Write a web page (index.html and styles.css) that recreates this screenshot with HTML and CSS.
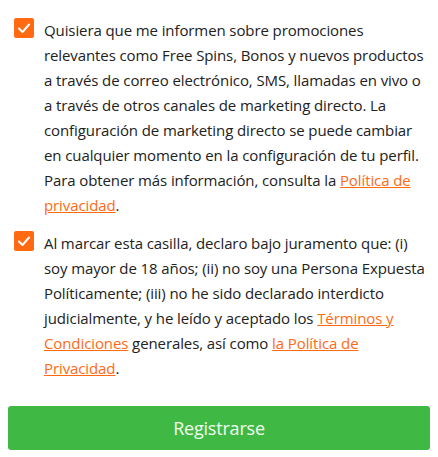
FILE: index.html
```html
<!DOCTYPE html>
<html lang="es">
<head>
<meta charset="utf-8">
<link rel="stylesheet" href="styles.css">
</head>
<body>
<div class="form">
  <label class="consent consent-marketing">
    <span class="box"><svg viewBox="0 0 20 20" width="20" height="20"><path d="M5 10.5 L8.5 14 L15 6.5" fill="none" stroke="#fff" stroke-width="2" stroke-linecap="round" stroke-linejoin="round"/></svg></span>
    <span class="text">Quisiera que me informen sobre promociones relevantes como Free Spins, Bonos y nuevos productos a través de correo electrónico, SMS, llamadas en vivo o a través de otros canales de marketing directo. La configuración de marketing directo se puede cambiar en cualquier momento en la configuración de tu perfil. Para obtener más información, consulta la <a href="#">Política de privacidad</a>.</span>
  </label>
  <label class="consent consent-legal">
    <span class="box"><svg viewBox="0 0 20 20" width="20" height="20"><path d="M5 10.5 L8.5 14 L15 6.5" fill="none" stroke="#fff" stroke-width="2" stroke-linecap="round" stroke-linejoin="round"/></svg></span>
    <span class="text">Al marcar esta casilla, declaro bajo juramento que: (i) soy mayor de 18 años; (ii) no soy una Persona Expuesta Políticamente; (iii) no he sido declarado interdicto judicialmente, y he leído y aceptado los <a href="#">Términos y Condiciones</a> generales, así como <a href="#">la Política de Privacidad</a>.</span>
  </label>
  <button class="submit" type="button">Registrarse</button>
</div>
</body>
</html>
```
FILE: styles.css
```css
html, body {
  margin: 0;
  padding: 0;
  background: #fff;
}
body {
  padding: 18px 8px 0 8px;
  font-family: "Open Sans", "Noto Sans", sans-serif;
  font-size: 15px;
  line-height: 25px;
  color: #222;
}
.form {
  display: flex;
  flex-direction: column;
}
.consent {
  display: flex;
  align-items: flex-start;
  gap: 10px;
  padding-left: 6px;
}
.consent-legal {
  margin-top: 13px;
}
.box {
  flex: 0 0 20px;
  width: 20px;
  height: 20px;
  border-radius: 2px;
  background: #ff6a13;
  display: flex;
}
.text {
  flex: 1;
  letter-spacing: -0.1px;
}
.text a {
  color: #ff6a13;
  text-decoration: underline;
}
.submit {
  margin-top: 25px;
  height: 44px;
  width: 100%;
  border: none;
  border-radius: 3px;
  background: #3fb944;
  color: #f2fff0;
  font-family: "Open Sans", "Noto Sans", sans-serif;
  font-size: 18px;
  letter-spacing: -0.2px;
}
```
